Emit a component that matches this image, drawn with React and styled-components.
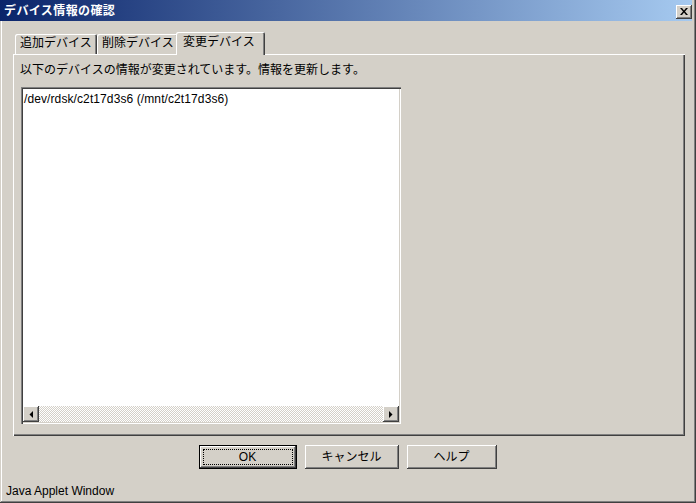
import React from 'react';
import styled, { createGlobalStyle } from 'styled-components';

const FONT = `"Liberation Sans", "Noto Sans CJK JP", sans-serif`;
const FACE = '#d4d0c8';

const Global = createGlobalStyle`
  html, body { margin: 0; padding: 0; background: ${FACE}; }
  body { font-family: ${FONT}; font-size: 12px; color: #000; }
  * { box-sizing: border-box; }
`;

const Window = styled.div`
  width: 696px;
  height: 503px;
  background: ${FACE};
  display: flex;
  flex-direction: column;
  padding: 0 3px 2px 2px;
  box-shadow: inset -1px -1px #404040, inset 1px 0 #d4d0c8, inset -2px -2px #808080, inset 2px 0 #fff;
  overflow: hidden;
`;

const TitleBar = styled.div`
  height: 21px;
  margin: 0 1px 0 -2px;
  display: flex;
  align-items: center;
  justify-content: space-between;
  padding: 0 0 0 4px;
  background: linear-gradient(to right, #0a246a, #a6caf0);
`;

const Title = styled.span`
  color: #fff;
  font-weight: bold;
  font-size: 12px;
  line-height: 14px;
  letter-spacing: 0.4px;
`;

const CloseButton = styled.div`
  width: 16px;
  height: 14px;
  margin-top: 3px;
  background: ${FACE};
  box-shadow: inset -1px -1px #404040, inset 1px 1px #fff, inset -2px -2px #808080;
  display: flex;
  align-items: center;
  justify-content: center;
  padding: 0 1px 1px 0;
`;

const Body = styled.div`
  flex: 1;
  display: flex;
  flex-direction: column;
  padding: 11px 8px 0 11px;
`;

const TabRow = styled.div`
  display: flex;
  align-items: flex-end;
  height: 22px;
  padding-left: 2px;
  position: relative;
  z-index: 1;
`;

const Tab = styled.div`
  height: ${p => (p.$active ? 23 : 20)}px;
  width: ${p => p.$w}px;
  margin: ${p => (p.$active ? '0 -2px -1px -2px' : '0')};
  padding: ${p => (p.$active ? '3px 0 0 7px' : '2px 0 0 5px')};
  background: ${FACE};
  font-size: 12px;
  line-height: 14px;
  white-space: nowrap;
  border-radius: 2px 2px 0 0;
  box-shadow: inset 1px 1px #fff, inset -1px 0 #404040, inset -2px 0 #808080;
  position: relative;
`;

const Panel = styled.div`
  height: 382px;
  background: ${FACE};
  box-shadow: inset 1px 1px #fff, inset -1px -1px #404040, inset -2px -2px #808080;
  padding: 9px 0 0 8px;
  display: flex;
  flex-direction: column;
`;

const Label = styled.div`
  font-size: 12px;
  line-height: 14px;
  margin-left: -1px;
  height: 24px;
`;

const TextBox = styled.div`
  width: 380px;
  height: 337px;
  background: #fff;
  box-shadow: inset 1px 1px #808080, inset 2px 2px #404040, inset -1px -1px #fff, inset -2px -2px ${FACE};
  padding: 2px;
  display: flex;
  flex-direction: column;
`;

const TextContent = styled.div`
  flex: 1;
  padding: 3px 0 0 1px;
  font-size: 12px;
  line-height: 14px;
  letter-spacing: 0.1px;
`;

const HScroll = styled.div`
  height: 16px;
  display: flex;
  background: repeating-conic-gradient(#fff 0 25%, ${FACE} 0 50%) 0 0 / 2px 2px;
`;

const ScrollBtn = styled.div`
  width: 16px;
  height: 16px;
  background: ${FACE};
  box-shadow: inset -1px -1px #404040, inset 1px 1px #fff, inset -2px -2px #808080;
  display: flex;
  align-items: center;
  justify-content: center;
`;

const Track = styled.div`
  flex: 1;
`;

const ButtonRow = styled.div`
  display: flex;
  justify-content: center;
  gap: 8px;
  margin-top: 9px;
  margin-left: -3px;
`;

const Button = styled.div`
  width: ${p => p.$w}px;
  height: 24px;
  background: ${FACE};
  display: flex;
  align-items: center;
  justify-content: center;
  font-size: 12px;
  line-height: 14px;
  position: relative;
  box-shadow: ${p =>
    p.$default
      ? 'inset 0 0 0 1px #000, inset -2px -2px #404040, inset 2px 2px #fff, inset -3px -3px #808080'
      : 'inset -1px -1px #404040, inset 1px 1px #fff, inset -2px -2px #808080'};
`;

const Focus = styled.div`
  position: absolute;
  left: 4px;
  top: 4px;
  right: 4px;
  bottom: 4px;
  border: 1px dotted #000;
`;

const Status = styled.div`
  margin-top: auto;
  padding: 0 0 3px 4px;
  font-size: 12px;
  line-height: 14px;
`;

const Arrow = ({ dir }) => (
  <svg width="4" height="7" viewBox="0 0 4 7">
    {dir === 'left' ? <path d="M4 0V7L0.5 3.5Z" fill="#000" /> : <path d="M0 0V7L3.5 3.5Z" fill="#000" />}
  </svg>
);

export default function App() {
  return (
    <>
      <Global />
      <Window>
        <TitleBar>
          <Title>デバイス情報の確認</Title>
          <CloseButton>
            <svg width="8" height="7" viewBox="0 0 8 7">
              <path d="M0 0h2l2 2.5L6 0h2L5 3.5L8 7H6L4 4.5L2 7H0l3-3.5Z" fill="#000" />
            </svg>
          </CloseButton>
        </TitleBar>
        <Body>
          <TabRow>
            <Tab $w={82}>追加デバイス</Tab>
            <Tab $w={81}>削除デバイス</Tab>
            <Tab $w={89} $active>変更デバイス</Tab>
          </TabRow>
          <Panel>
            <Label>以下のデバイスの情報が変更されています。情報を更新します。</Label>
            <TextBox>
              <TextContent>/dev/rdsk/c2t17d3s6 (/mnt/c2t17d3s6)</TextContent>
              <HScroll>
                <ScrollBtn><Arrow dir="left" /></ScrollBtn>
                <Track />
                <ScrollBtn><Arrow dir="right" /></ScrollBtn>
              </HScroll>
            </TextBox>
          </Panel>
          <ButtonRow>
            <Button $w={98} $default>OK<Focus /></Button>
            <Button $w={94}>キャンセル</Button>
            <Button $w={90}>ヘルプ</Button>
          </ButtonRow>
        </Body>
        <Status>Java Applet Window</Status>
      </Window>
    </>
  );
}
